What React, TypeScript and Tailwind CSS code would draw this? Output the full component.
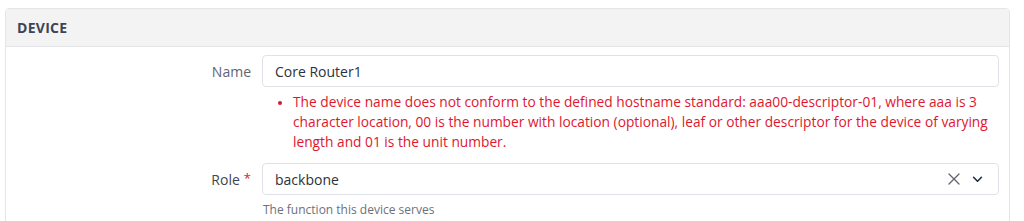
const FONT = { fontFamily: '"Open Sans", "Noto Sans", sans-serif' };

const ERRORS = [
  'The device name does not conform to the defined hostname standard: aaa00-descriptor-01, where aaa is 3 character location, 00 is the number with location (optional), leaf or other descriptor for the device of varying length and 01 is the unit number.',
];

function Chevron() {
  return (
    <svg viewBox="0 0 12 8" className="w-[11px] h-[7px]" fill="none" stroke="#1e2a4a" strokeWidth="1.8" strokeLinecap="round" strokeLinejoin="round">
      <path d="M1.5 1.5 6 6l4.5-4.5" />
    </svg>
  );
}

function Clear() {
  return (
    <svg viewBox="0 0 12 12" className="w-[12px] h-[12px]" fill="none" stroke="#5f646c" strokeWidth="1.3" strokeLinecap="round">
      <path d="M1 1l10 10M11 1 1 11" />
    </svg>
  );
}

export default function App() {
  return (
    <div className="bg-white w-[1024px] h-[221px] pt-2 pl-[5px] pr-[14px] overflow-hidden" style={FONT}>
      <div className="border border-[#e3e5e8] rounded-[4px] h-[240px]">
        {/* Header */}
        <div className="h-[38px] bg-[#f3f3f4] border-b border-[#e3e5e8] rounded-t-[4px] flex items-center px-[11px]">
          <span className="text-[14px] font-bold text-[#3b4555] tracking-[0.02em]">DEVICE</span>
        </div>

        <div className="pt-[8px]">
          {/* Name */}
          <div className="flex">
            <div className="w-[256px] flex-shrink-0 pr-[11px] h-[32px] flex items-center justify-end">
              <span className="text-[14px] text-[#5e6673]">Name</span>
            </div>
            <div className="flex-1 mr-[10px]">
              <div className="h-[32px] border border-[#dfe2e6] rounded-[4px] flex items-center px-[12px]">
                <span className="text-[14px] text-[#2a3240]">Core Router1</span>
              </div>
              <div className="pt-[5px] pl-[16px]">
                {ERRORS.map((e) => (
                  <div key={e} className="flex gap-[11px] text-[13.75px] leading-[20px] text-[#e0162f]">
                    <span className="w-[4px] h-[4px] rounded-full bg-[#e0162f] mt-[9px] flex-shrink-0" />
                    <span>{e}</span>
                  </div>
                ))}
              </div>
            </div>
          </div>

          {/* Role */}
          <div className="flex mt-[11px]">
            <div className="w-[256px] flex-shrink-0 pr-[11px] h-[32px] flex items-center justify-end gap-[4px]">
              <span className="text-[14px] text-[#3f4652]">Role</span>
              <span className="text-[13px] text-[#e0162f]">*</span>
            </div>
            <div className="flex-1 mr-[10px]">
              <div className="h-[32px] border border-[#dfe2e6] rounded-[4px] flex items-center pl-[12px] pr-[15px]">
                <span className="flex-1 text-[14px] text-[#2a3240]">backbone</span>
                <Clear />
                <span className="w-[12px]" />
                <Chevron />
              </div>
              <p className="pt-[6px] pl-[1px] text-[12px] text-[#6b717a]">The function this device serves</p>
            </div>
          </div>
        </div>
      </div>
    </div>
  );
}
